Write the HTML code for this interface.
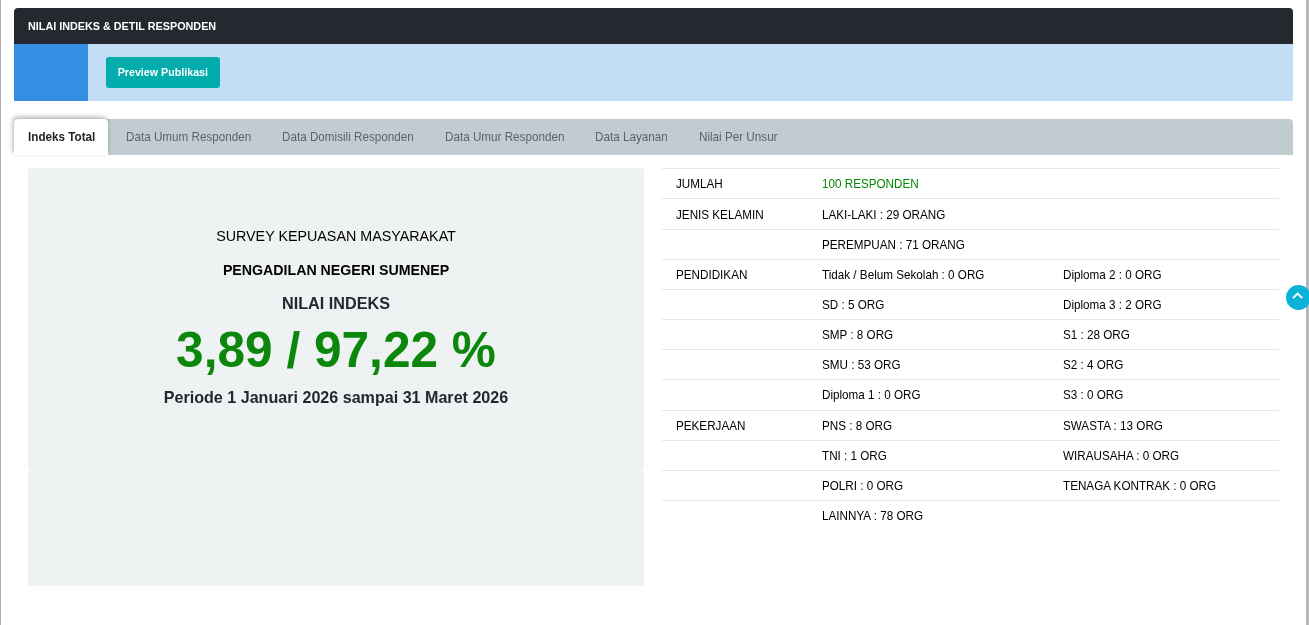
<!DOCTYPE html>
<html>
<head>
<meta charset="utf-8">
<style>
*{box-sizing:border-box;margin:0;padding:0}
html,body{width:1309px;height:625px;overflow:hidden;background:#fff;font-family:"Liberation Sans",sans-serif;color:#212529}
.abs{position:absolute}
#wrap{position:absolute;left:0;top:0;width:1309px;height:625px;will-change:transform}
#lline{left:0;top:0;width:1px;height:625px;background:#a9adb1}
#rline{left:1306px;top:0;width:3px;height:625px;background:#b4b7bb}
#hdr{left:14px;top:8px;width:1279px;height:36px;background:#24282f;border-radius:4px 4px 0 0}
#hdr span{position:absolute;left:14px;top:10.6px;font-size:10.8px;font-weight:bold;color:#fff;line-height:14px;white-space:nowrap}
#note{left:14px;top:44px;width:1279px;height:57px;background:#c3ddf6}
#noteicon{left:14px;top:44px;width:74px;height:57px;background:#348fe2}
#btn{left:106px;top:57px;width:114px;height:31px;background:#00acac;border-radius:3px}
#btn span{position:absolute;left:11.7px;top:8px;font-size:10.7px;font-weight:bold;color:#fff;line-height:14px;white-space:nowrap}
#tabs{left:14px;top:119px;width:1279px;height:36px;background:#c1ccd1;border-radius:4px 4px 0 0}
#tabact{left:14px;top:119px;width:94px;height:36px;background:#fff;border-radius:4px 4px 0 0;box-shadow:-1px -2px 5px rgba(0,0,0,.3)}
.tab{position:absolute;top:129.6px;font-size:12.2px;transform:scaleX(0.958);transform-origin:0 0;line-height:14px;color:#5c636a;white-space:nowrap}
#box1{left:28px;top:168px;width:616px;height:303px;background:#eff2f3;border-radius:4px}
#box2{left:28px;top:471px;width:616px;height:115px;background:#eff2f3;border-radius:4px}
.ctr{position:absolute;left:28px;width:616px;text-align:center;white-space:nowrap}
.row{position:absolute;left:662px;width:617px;height:30px;border-top:1px solid #e2e6e9}
.c{position:absolute;font-size:12.2px;transform:scaleX(0.958);transform-origin:0 0;line-height:14px;color:#000;white-space:nowrap}
#totop{left:1286px;top:285px;width:25px;height:25px;border-radius:50%;background:#0db3d6}
</style>
</head>
<body>
<div id="wrap">
<div class="abs" id="lline"></div>
<div class="abs" id="rline"></div>
<div class="abs" id="hdr"><span>NILAI INDEKS &amp; DETIL RESPONDEN</span></div>
<div class="abs" id="note"></div>
<div class="abs" id="noteicon"></div>
<div class="abs" id="btn"><span>Preview Publikasi</span></div>
<div class="abs" id="tabs"></div>
<div class="abs" id="tabact"></div>
<div class="tab" style="left:27.5px;color:#212529;font-weight:bold">Indeks Total</div>
<div class="tab" style="left:126px">Data Umum Responden</div>
<div class="tab" style="left:282px">Data Domisili Responden</div>
<div class="tab" style="left:445px">Data Umur Responden</div>
<div class="tab" style="left:595px">Data Layanan</div>
<div class="tab" style="left:699px">Nilai Per Unsur</div>

<div class="abs" id="box1"></div>
<div class="abs" id="box2"></div>
<div class="ctr" style="top:227px;font-size:14.3px;line-height:18px;color:#000">SURVEY KEPUASAN MASYARAKAT</div>
<div class="ctr" style="top:261px;font-size:14.2px;line-height:18px;font-weight:bold;color:#000">PENGADILAN NEGERI SUMENEP</div>
<div class="ctr" style="top:293px;font-size:16.2px;line-height:20px;font-weight:bold;color:#24282e">NILAI INDEKS</div>
<div class="ctr" style="top:319.5px;font-size:49.6px;line-height:60px;font-weight:bold;color:#0b880b">3,89 / 97,22 %</div>
<div class="ctr" style="top:387px;font-size:16.1px;line-height:20px;font-weight:bold;color:#24282e">Periode 1 Januari 2026 sampai 31 Maret 2026</div>

<div id="rows">
<div class="row" style="top:168px">
<div class="c" style="left:14px;top:8px">JUMLAH</div>
<div class="c" style="left:159.5px;top:8px;color:#008a00">100 RESPONDEN</div>
</div>
<div class="row" style="top:198px">
<div class="c" style="left:14px;top:9px">JENIS KELAMIN</div>
<div class="c" style="left:159.5px;top:9px">LAKI-LAKI : 29 ORANG</div>
</div>
<div class="row" style="top:229px">
<div class="c" style="left:159.5px;top:8px">PEREMPUAN : 71 ORANG</div>
</div>
<div class="row" style="top:259px">
<div class="c" style="left:14px;top:8px">PENDIDIKAN</div>
<div class="c" style="left:159.5px;top:8px">Tidak / Belum Sekolah : 0 ORG</div>
<div class="c" style="left:401px;top:8px">Diploma 2 : 0 ORG</div>
</div>
<div class="row" style="top:289px">
<div class="c" style="left:159.5px;top:8px">SD : 5 ORG</div>
<div class="c" style="left:401px;top:8px">Diploma 3 : 2 ORG</div>
</div>
<div class="row" style="top:319px">
<div class="c" style="left:159.5px;top:8px">SMP : 8 ORG</div>
<div class="c" style="left:401px;top:8px">S1 : 28 ORG</div>
</div>
<div class="row" style="top:349px">
<div class="c" style="left:159.5px;top:8px">SMU : 53 ORG</div>
<div class="c" style="left:401px;top:8px">S2 : 4 ORG</div>
</div>
<div class="row" style="top:379px">
<div class="c" style="left:159.5px;top:8px">Diploma 1 : 0 ORG</div>
<div class="c" style="left:401px;top:8px">S3 : 0 ORG</div>
</div>
<div class="row" style="top:410px">
<div class="c" style="left:14px;top:8px">PEKERJAAN</div>
<div class="c" style="left:159.5px;top:8px">PNS : 8 ORG</div>
<div class="c" style="left:401px;top:8px">SWASTA : 13 ORG</div>
</div>
<div class="row" style="top:440px">
<div class="c" style="left:159.5px;top:8px">TNI : 1 ORG</div>
<div class="c" style="left:401px;top:8px">WIRAUSAHA : 0 ORG</div>
</div>
<div class="row" style="top:470px">
<div class="c" style="left:159.5px;top:8px">POLRI : 0 ORG</div>
<div class="c" style="left:401px;top:8px">TENAGA KONTRAK : 0 ORG</div>
</div>
<div class="row" style="top:500px">
<div class="c" style="left:159.5px;top:8px">LAINNYA : 78 ORG</div>
</div>
</div>
<div class="abs" id="totop"><svg width="25" height="25" viewBox="0 0 25 25" style="position:absolute;left:0;top:0"><path d="M7 13.1 L11.6 8.6 L16.3 13.1" fill="none" stroke="#fff" stroke-width="2"/></svg></div>
</div>
</body>
</html>
